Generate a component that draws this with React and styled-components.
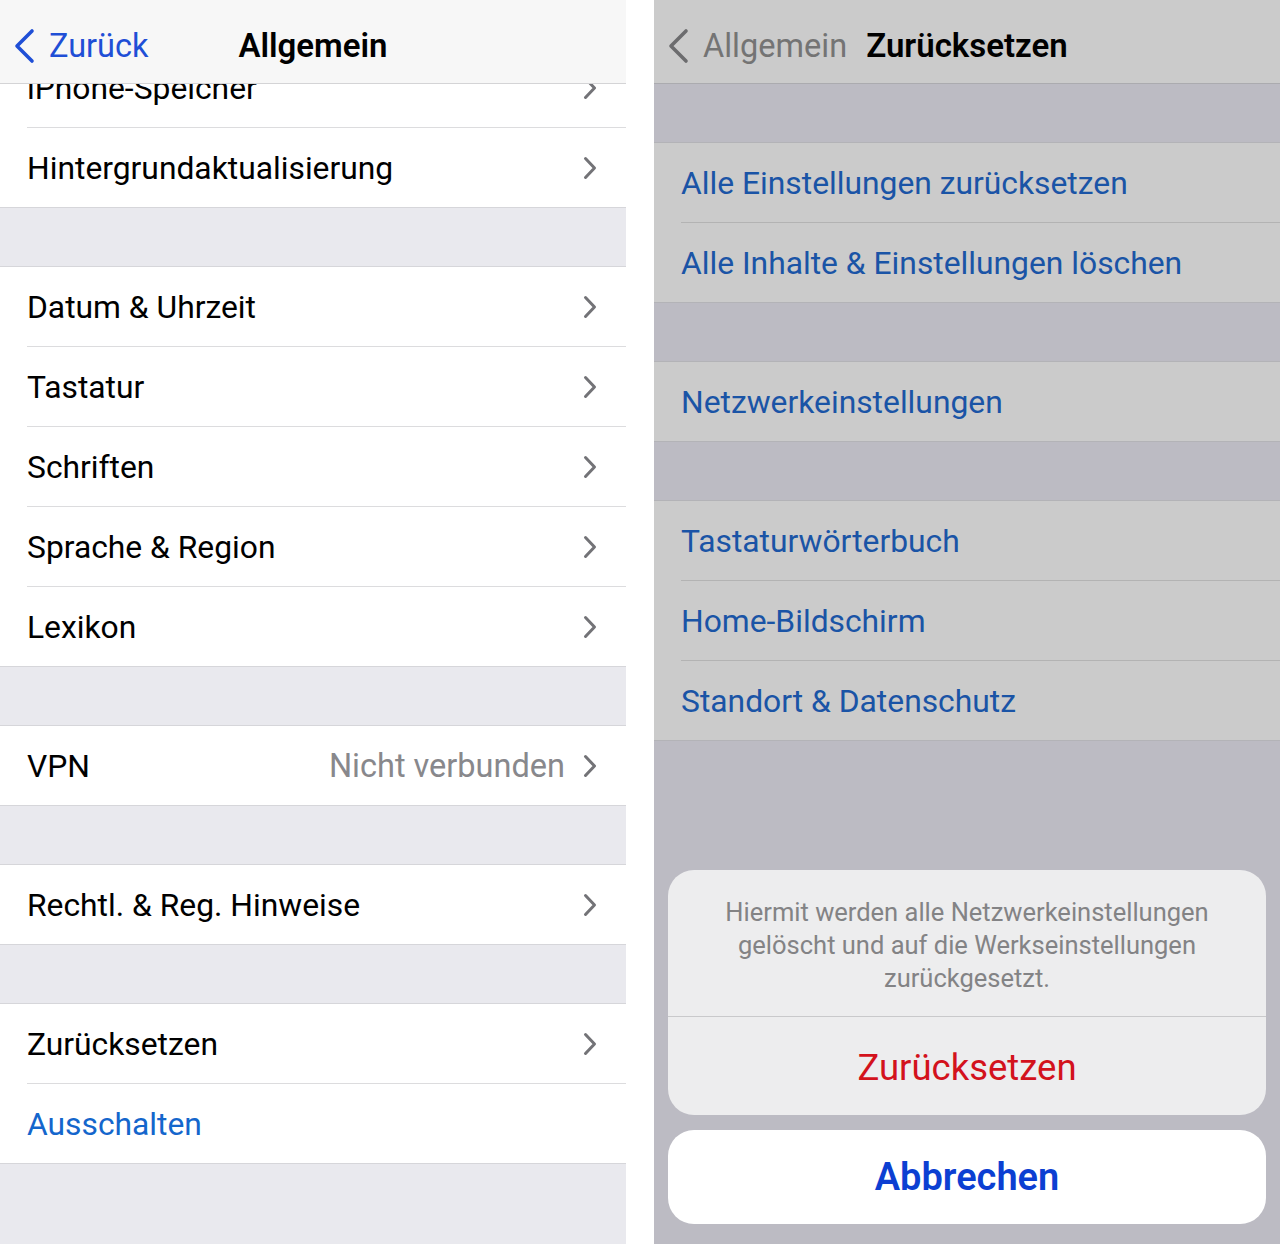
import React from 'react'
import styled, { createGlobalStyle } from 'styled-components'

const GlobalStyle = createGlobalStyle`
    html, body {
        margin: 0;
        padding: 0;
        background: #ffffff;
    }
    body {
        font-family: Roboto, "Noto Sans", "Liberation Sans", sans-serif;
        -webkit-font-smoothing: antialiased;
    }
`

const Chevron = ({ color = '#737377', w = 14, h = 24, stroke = 3 }) => (
    <svg width={w} height={h} viewBox="0 0 14 24" fill="none">
        <path d="M2.5 2.5 L11.5 12 L2.5 21.5" stroke={color} strokeWidth={stroke} strokeLinecap="round" strokeLinejoin="round" />
    </svg>
)

const BackChevron = ({ color }) => (
    <svg width="24" height="36" viewBox="0 0 24 36" fill="none">
        <path d="M19 3 L4 18 L19 33" stroke={color} strokeWidth="3.6" strokeLinecap="round" strokeLinejoin="round" />
    </svg>
)

const leftGroups = [
    { clipped: true, rows: [{ label: 'iPhone-Speicher' }, { label: 'Hintergrundaktualisierung' }] },
    { rows: [{ label: 'Datum & Uhrzeit' }, { label: 'Tastatur' }, { label: 'Schriften' }, { label: 'Sprache & Region' }, { label: 'Lexikon' }] },
    { rows: [{ label: 'VPN', value: 'Nicht verbunden' }] },
    { rows: [{ label: 'Rechtl. & Reg. Hinweise' }] },
    { rows: [{ label: 'Zurücksetzen' }, { label: 'Ausschalten', link: true, noChevron: true }] },
]

const rightGroups = [
    ['Alle Einstellungen zurücksetzen', 'Alle Inhalte & Einstellungen löschen'],
    ['Netzwerkeinstellungen'],
    ['Tastaturwörterbuch', 'Home-Bildschirm', 'Standort & Datenschutz'],
]

const App = () => {
    return (
        <>
            <GlobalStyle />
            <Screen>
                <Panel>
                    <NavBar>
                        <BackButton>
                            <BackChevron color="#1f4fd6" />
                            <span>Zurück</span>
                        </BackButton>
                        <NavTitle>Allgemein</NavTitle>
                    </NavBar>
                    <Scroller>
                        <List $offset={-36}>
                            {leftGroups.map((group, gi) => (
                                <Group key={gi} $first={group.clipped}>
                                    {group.rows.map((row, ri) => (
                                        <React.Fragment key={row.label}>
                                            {ri > 0 && <Separator />}
                                            <Row>
                                                <RowLabel $link={row.link}>{row.label}</RowLabel>
                                                <RowRight>
                                                    {row.value && <RowValue>{row.value}</RowValue>}
                                                    {!row.noChevron && <Chevron />}
                                                </RowRight>
                                            </Row>
                                        </React.Fragment>
                                    ))}
                                </Group>
                            ))}
                        </List>
                    </Scroller>
                </Panel>

                <Panel $dim>
                    <NavBar $dim>
                        <BackButton $dim>
                            <BackChevron color="#6c6c6e" />
                            <span>Allgemein</span>
                        </BackButton>
                        <NavTitle>Zurücksetzen</NavTitle>
                    </NavBar>
                    <List $dim>
                        {rightGroups.map((group, gi) => (
                            <Group key={gi} $dim>
                                {group.map((label, ri) => (
                                    <React.Fragment key={label}>
                                        {ri > 0 && <Separator $dim />}
                                        <Row $dim>
                                            <RowLabel $dimLink>{label}</RowLabel>
                                        </Row>
                                    </React.Fragment>
                                ))}
                            </Group>
                        ))}
                    </List>
                    <SheetArea>
                        <SheetCard>
                            <SheetMessage>
                                Hiermit werden alle Netzwerkeinstellungen<br />
                                gelöscht und auf die Werkseinstellungen<br />
                                zurückgesetzt.
                            </SheetMessage>
                            <SheetAction $destructive>Zurücksetzen</SheetAction>
                        </SheetCard>
                        <CancelCard>
                            <SheetAction $cancel>Abbrechen</SheetAction>
                        </CancelCard>
                    </SheetArea>
                </Panel>
            </Screen>
        </>
    )
}

export default App

const Screen = styled.div`
    display: grid;
    grid-template-columns: 626px 626px;
    column-gap: 28px;
    width: 1280px;
    height: 1244px;
    overflow: hidden;
`

const Panel = styled.div`
    display: flex;
    flex-direction: column;
    height: 1244px;
    overflow: hidden;
    background: ${p => (p.$dim ? '#bcbbc3' : '#e9e9ee')};
`

const NavBar = styled.div`
    position: relative;
    z-index: 2;
    flex: 0 0 auto;
    display: flex;
    align-items: center;
    justify-content: center;
    box-sizing: border-box;
    height: 84px;
    padding-top: 7px;
    background: ${p => (p.$dim ? '#cbcbcb' : '#f7f7f7')};
    border-bottom: 1px solid ${p => (p.$dim ? '#ababaf' : '#d4d4d6')};
`

const BackButton = styled.div`
    position: absolute;
    left: 13px;
    top: 8px;
    bottom: 0;
    display: flex;
    align-items: center;
    gap: 12px;
    font-size: 32.5px;
    color: ${p => (p.$dim ? '#747474' : '#1f4fd6')};
`

const NavTitle = styled.div`
    font-size: 33px;
    font-weight: 600;
    color: #000;
`

const Scroller = styled.div`
    flex: 1 1 auto;
    overflow: hidden;
`

const List = styled.div`
    display: flex;
    flex-direction: column;
    gap: 58px;
    margin-top: ${p => (p.$offset ? `${p.$offset}px` : '0')};
    padding-top: ${p => (p.$dim ? '58px' : '0')};
`

const Group = styled.div`
    display: flex;
    flex-direction: column;
    background: ${p => (p.$dim ? '#cbcbcb' : '#ffffff')};
    border-top: ${p => (p.$first ? 'none' : `1px solid ${p.$dim ? '#b3b3b7' : '#d6d6da'}`)};
    border-bottom: 1px solid ${p => (p.$dim ? '#b3b3b7' : '#d6d6da')};
`

const Separator = styled.div`
    height: 1px;
    margin-left: 27px;
    background: ${p => (p.$dim ? '#b3b3b3' : '#dcdcde')};
`

const Row = styled.div`
    display: flex;
    align-items: center;
    justify-content: space-between;
    height: 79px;
    padding: 0 29px 0 27px;
`

const RowLabel = styled.div`
    font-size: 31.8px;
    color: ${p => (p.$dimLink ? '#1a54a6' : p.$link ? '#1466cc' : '#000000')};
`

const RowRight = styled.div`
    display: flex;
    align-items: center;
    gap: 18px;
`

const RowValue = styled.div`
    font-size: 32.5px;
    color: #88888c;
`

const SheetArea = styled.div`
    flex: 1 1 auto;
    display: flex;
    flex-direction: column;
    justify-content: flex-end;
    gap: 15px;
    padding: 0 14px 20px 14px;
`

const SheetCard = styled.div`
    display: flex;
    flex-direction: column;
    background: #ededee;
    border-radius: 26px;
    overflow: hidden;
`

const CancelCard = styled.div`
    display: flex;
    flex-direction: column;
    background: #ffffff;
    border-radius: 26px;
    overflow: hidden;
`

const SheetMessage = styled.div`
    padding: 26px 10px 21px;
    text-align: center;
    font-size: 25.5px;
    line-height: 33px;
    color: #838385;
    border-bottom: 1px solid #c9c9cb;
`

const SheetAction = styled.div`
    display: flex;
    align-items: center;
    justify-content: center;
    height: ${p => (p.$cancel ? '94px' : '95px')};
    font-size: ${p => (p.$cancel ? '38px' : '36.5px')};
    font-weight: ${p => (p.$cancel ? 600 : 400)};
    color: ${p => (p.$destructive ? '#d3121c' : '#0c3fd2')};
    padding-top: ${p => (p.$destructive ? '3px' : '0')};
`
